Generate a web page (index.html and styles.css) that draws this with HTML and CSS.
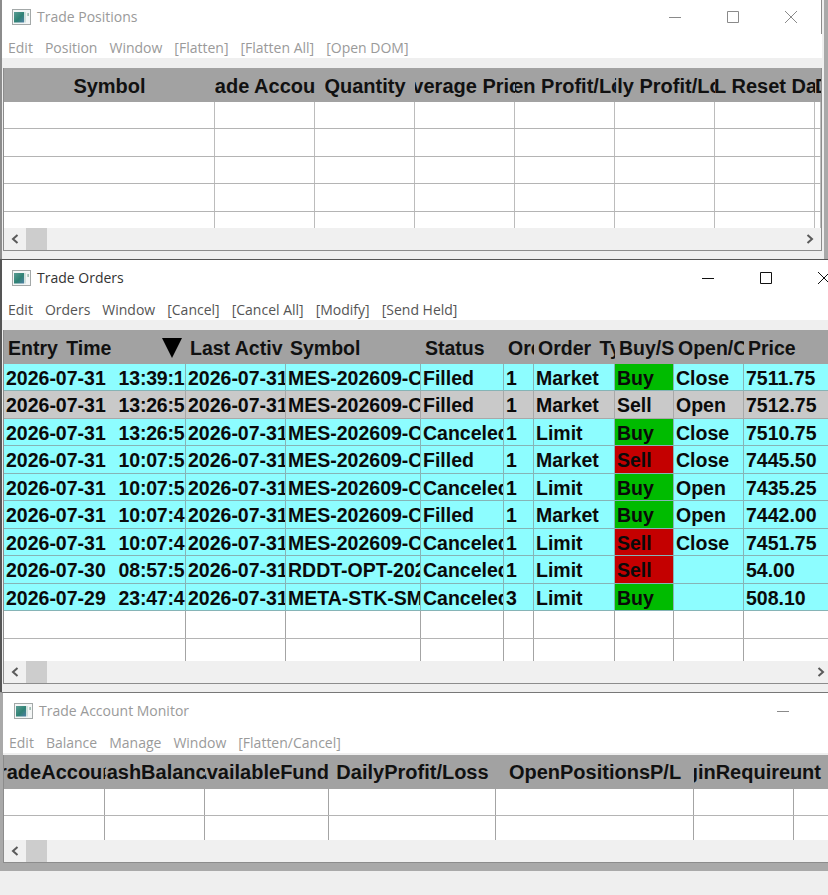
FILE: index.html
```html
<!DOCTYPE html>
<html lang="en">
<head>
<meta charset="utf-8">
<title>Trade Windows</title>
<link rel="stylesheet" href="styles.css">
</head>
<body>
<svg class="defs" aria-hidden="true">
  <defs>
    <linearGradient id="iconFill" x1="0" y1="0" x2="1" y2="1">
      <stop offset="0" stop-color="#5a9c94"/>
      <stop offset="0.55" stop-color="#2f8274"/>
      <stop offset="1" stop-color="#4f7fa6"/>
    </linearGradient>
    <symbol id="appIcon" viewBox="0 0 19 16">
      <rect x="0.5" y="0.5" width="18" height="15" fill="#f4f6f6" stroke="#a3a8a8"/>
      <rect x="2" y="3" width="10" height="10.5" fill="url(#iconFill)"/>
      <rect x="12" y="3" width="2" height="10.5" fill="#cfe0dc"/>
      <rect x="15.5" y="4" width="1.2" height="3" fill="#7fa89a"/>
    </symbol>
  </defs>
</svg>
<main class="desktop">

  <section class="win win--positions">
    <header class="titlebar titlebar--edge">
      <svg class="app-icon"><use href="#appIcon"/></svg>
      <span class="title">Trade Positions</span>
      <div class="controls">
        <span class="ctl"><svg class="ctl-icon" viewBox="0 0 12 12"><path d="M0 6.5H12"/></svg></span>
        <span class="ctl"><svg class="ctl-icon" viewBox="0 0 12 12"><path d="M.5.5H11.5V11.5H.5Z"/></svg></span>
        <span class="ctl"><svg class="ctl-icon" viewBox="0 0 12 12"><path d="M0 0L12 12M12 0L0 12"/></svg></span>
      </div>
    </header>
    <nav class="menu">
      <span>Edit</span><span>Position</span><span>Window</span><span>[Flatten]</span><span>[Flatten All]</span><span>[Open DOM]</span>
    </nav>
    <div class="band"></div>
    <div class="frame">
      <div class="row row--head row--wide cols-pos">
        <div class="cell hc">Symbol</div><div class="cell hc">Trade Account</div><div class="cell hc">Quantity</div><div class="cell hc">Average Price</div><div class="cell hc">Open Profit/Loss</div><div class="cell hc">Daily Profit/Loss</div><div class="cell hc">P/L Reset Date</div><div class="cell hs">Date</div>
      </div>
      <div class="grid grid--pos">
        <div class="row cols-pos"><i></i><i></i><i></i><i></i><i></i><i></i><i></i><i></i></div>
        <div class="row cols-pos"><i></i><i></i><i></i><i></i><i></i><i></i><i></i><i></i></div>
        <div class="row cols-pos"><i></i><i></i><i></i><i></i><i></i><i></i><i></i><i></i></div>
        <div class="row cols-pos"><i></i><i></i><i></i><i></i><i></i><i></i><i></i><i></i></div>
        <div class="row cols-pos"><i></i><i></i><i></i><i></i><i></i><i></i><i></i><i></i></div>
      </div>
      <div class="scroll">
        <span class="arrow"><svg viewBox="0 0 8 10"><path d="M6.5 1L2 5l4.5 4"/></svg></span>
        <span class="thumb"></span>
        <span class="arrow arrow--end"><svg viewBox="0 0 8 10"><path d="M1.5 1L6 5 1.5 9"/></svg></span>
      </div>
    </div>
  </section>

  <section class="win win--orders">
    <header class="titlebar titlebar--tall">
      <svg class="app-icon"><use href="#appIcon"/></svg>
      <span class="title title--active">Trade Orders</span>
      <div class="controls controls--active">
        <span class="ctl"><svg class="ctl-icon" viewBox="0 0 12 12"><path d="M0 6.5H12"/></svg></span>
        <span class="ctl"><svg class="ctl-icon" viewBox="0 0 12 12"><path d="M.5.5H11.5V11.5H.5Z"/></svg></span>
        <span class="ctl"><svg class="ctl-icon" viewBox="0 0 12 12"><path d="M0 0L12 12M12 0L0 12"/></svg></span>
      </div>
    </header>
    <nav class="menu menu--active">
      <span>Edit</span><span>Orders</span><span>Window</span><span>[Cancel]</span><span>[Cancel All]</span><span>[Modify]</span><span>[Send Held]</span>
    </nav>
    <div class="band"></div>
    <div class="frame">
      <div class="row row--head cols-ord">
        <div class="cell hl hl--sort hl--gap">Entry Time<span class="sort"></span></div><div class="cell hl">Last Activ</div><div class="cell hl">Symbol</div><div class="cell hl">Status</div><div class="cell hl">Order Qty</div><div class="cell hl hl--gap">Order Type</div><div class="cell hl">Buy/Sell</div><div class="cell hl">Open/Close</div><div class="cell hl">Price</div>
      </div>
      <div class="grid grid--ord">
        <div class="row data cols-ord"><div class="cell dt">2026-07-31  <span class="tm">13:39:15</span></div><div class="cell">2026-07-31 13:39</div><div class="cell">MES-202609-CME</div><div class="cell">Filled</div><div class="cell">1</div><div class="cell">Market</div><div class="cell buy">Buy</div><div class="cell">Close</div><div class="cell">7511.75</div></div>
        <div class="row data data--muted cols-ord"><div class="cell dt">2026-07-31  <span class="tm">13:26:55</span></div><div class="cell">2026-07-31 13:26</div><div class="cell">MES-202609-CME</div><div class="cell">Filled</div><div class="cell">1</div><div class="cell">Market</div><div class="cell">Sell</div><div class="cell">Open</div><div class="cell">7512.75</div></div>
        <div class="row data cols-ord"><div class="cell dt">2026-07-31  <span class="tm">13:26:55</span></div><div class="cell">2026-07-31 13:39</div><div class="cell">MES-202609-CME</div><div class="cell">Canceled</div><div class="cell">1</div><div class="cell">Limit</div><div class="cell buy">Buy</div><div class="cell">Close</div><div class="cell">7510.75</div></div>
        <div class="row data cols-ord"><div class="cell dt">2026-07-31  <span class="tm">10:07:55</span></div><div class="cell">2026-07-31 10:07</div><div class="cell">MES-202609-CME</div><div class="cell">Filled</div><div class="cell">1</div><div class="cell">Market</div><div class="cell sell">Sell</div><div class="cell">Close</div><div class="cell">7445.50</div></div>
        <div class="row data cols-ord"><div class="cell dt">2026-07-31  <span class="tm">10:07:55</span></div><div class="cell">2026-07-31 13:26</div><div class="cell">MES-202609-CME</div><div class="cell">Canceled</div><div class="cell">1</div><div class="cell">Limit</div><div class="cell buy">Buy</div><div class="cell">Open</div><div class="cell">7435.25</div></div>
        <div class="row data cols-ord"><div class="cell dt">2026-07-31  <span class="tm">10:07:41</span></div><div class="cell">2026-07-31 10:07</div><div class="cell">MES-202609-CME</div><div class="cell">Filled</div><div class="cell">1</div><div class="cell">Market</div><div class="cell buy">Buy</div><div class="cell">Open</div><div class="cell">7442.00</div></div>
        <div class="row data cols-ord"><div class="cell dt">2026-07-31  <span class="tm">10:07:41</span></div><div class="cell">2026-07-31 10:07</div><div class="cell">MES-202609-CME</div><div class="cell">Canceled</div><div class="cell">1</div><div class="cell">Limit</div><div class="cell sell">Sell</div><div class="cell">Close</div><div class="cell">7451.75</div></div>
        <div class="row data cols-ord"><div class="cell dt">2026-07-30  <span class="tm">08:57:51</span></div><div class="cell">2026-07-31 09:30</div><div class="cell">RDDT-OPT-20260821</div><div class="cell">Canceled</div><div class="cell">1</div><div class="cell">Limit</div><div class="cell sell">Sell</div><div class="cell"></div><div class="cell">54.00</div></div>
        <div class="row data cols-ord"><div class="cell dt">2026-07-29  <span class="tm">23:47:41</span></div><div class="cell">2026-07-31 09:30</div><div class="cell">META-STK-SMART</div><div class="cell">Canceled</div><div class="cell">3</div><div class="cell">Limit</div><div class="cell buy">Buy</div><div class="cell"></div><div class="cell">508.10</div></div>
        <div class="row cols-ord"><i></i><i></i><i></i><i></i><i></i><i></i><i></i><i></i><i></i></div>
        <div class="row cols-ord"><i></i><i></i><i></i><i></i><i></i><i></i><i></i><i></i><i></i></div>
      </div>
      <div class="scroll">
        <span class="arrow"><svg viewBox="0 0 8 10"><path d="M6.5 1L2 5l4.5 4"/></svg></span>
        <span class="thumb"></span>
        <span class="arrow arrow--end"><svg viewBox="0 0 8 10"><path d="M1.5 1L6 5 1.5 9"/></svg></span>
      </div>
    </div>
  </section>

  <section class="win win--monitor">
    <header class="titlebar titlebar--tall titlebar--inset">
      <svg class="app-icon"><use href="#appIcon"/></svg>
      <span class="title">Trade Account Monitor</span>
      <div class="controls">
        <span class="ctl"><svg class="ctl-icon" viewBox="0 0 12 12"><path d="M0 6.5H12"/></svg></span>
        <span class="ctl"><svg class="ctl-icon" viewBox="0 0 12 12"><path d="M.5.5H11.5V11.5H.5Z"/></svg></span>
        <span class="ctl"><svg class="ctl-icon" viewBox="0 0 12 12"><path d="M0 0L12 12M12 0L0 12"/></svg></span>
      </div>
    </header>
    <nav class="menu">
      <span>Edit</span><span>Balance</span><span>Manage</span><span>Window</span><span>[Flatten/Cancel]</span>
    </nav>
    <div class="band band--thin"></div>
    <div class="frame">
      <div class="row row--head row--wide row--high cols-mon">
        <div class="cell hc">TradeAccount</div><div class="cell hc">CashBalance</div><div class="cell hr hr--tight">AvailableFund</div><div class="cell hc">DailyProfit/Loss</div><div class="cell hc">OpenPositionsP/L</div><div class="cell hc">MarginRequirement</div><div class="cell hr">Account</div>
      </div>
      <div class="grid grid--mon">
        <div class="row cols-mon"><i></i><i></i><i></i><i></i><i></i><i></i><i></i></div>
        <div class="row cols-mon"><i></i><i></i><i></i><i></i><i></i><i></i><i></i></div>
      </div>
      <div class="scroll">
        <span class="arrow"><svg viewBox="0 0 8 10"><path d="M6.5 1L2 5l4.5 4"/></svg></span>
        <span class="thumb"></span>
      </div>
    </div>
  </section>

</main>
</body>
</html>
```

FILE: styles.css
```css
* { box-sizing: border-box; }

html, body {
  margin: 0;
  height: 100%;
  background: #efefef;
}

.defs { position: absolute; width: 0; height: 0; }

.desktop {
  position: relative;
  width: 828px;
  height: 895px;
  overflow: hidden;
  font-family: "Open Sans", "Noto Sans", sans-serif;
}

/* Windows sit on a free canvas, overlapping the viewport edge */
.win {
  position: absolute;
  left: 0;
  display: flex;
  flex-direction: column;
  background: #efefef;
}

.win--positions {
  top: 0;
  width: 828px;
  height: 259px;
  padding-right: 2px;
  border-left: 2px solid #8c8c8c;
  border-right: 4px solid #a9a9a9;
}

.win--orders {
  top: 259px;
  width: 853px;
  height: 433px;
  border-top: 1px solid #555;
  border-left: 2px solid #555;
}

.win--monitor {
  top: 692px;
  width: 928px;
  border-top: 1px solid #777;
  border-left: 3px solid #a9a9a9;
  border-bottom: 8px solid #a9a9a9;
}

/* Title bar */
.titlebar {
  flex: none;
  height: 34px;
  display: flex;
  align-items: center;
  gap: 6px;
  padding-left: 10px;
  background: #fff;
}
.titlebar--edge { border-right: 1px solid #8c8c8c; padding-right: 1px; }
.titlebar--tall { height: 36px; }
.titlebar--inset { padding-left: 11px; }

.app-icon { flex: none; width: 19px; height: 16px; }

.title {
  font-size: 14px;
  line-height: 20px;
  color: #9a9a9a;
  white-space: nowrap;
}
.title--active { color: #333; }

.controls { display: flex; margin-left: auto; }

.ctl {
  width: 58px;
  height: 20px;
  display: flex;
  align-items: center;
  justify-content: center;
}

.ctl-icon {
  width: 12px;
  height: 12px;
  fill: none;
  stroke: #8a8a8a;
  stroke-width: 1;
}
.controls--active .ctl-icon { stroke: #111; }

/* Menu */
.menu {
  flex: none;
  display: flex;
  gap: 12px;
  padding: 4px 0 0 6px;
  font-size: 14px;
  line-height: 20px;
  color: #9a9a9a;
  background: #fff;
  white-space: nowrap;
}
.menu--active { color: #555; }

.band { flex: none; height: 10px; background: #efefef; }
.band--thin { height: 2px; }

/* Table frame */
.frame {
  flex: none;
  margin-left: 1px;
  border-left: 1px solid #8c8c8c;
  border-right: 1px solid #8c8c8c;
  border-bottom: 1px solid #8c8c8c;
  background: #fff;
  overflow: hidden;
}
.win--monitor .frame { margin-left: 0; }

.row {
  display: grid;
  height: 28px;
  border-bottom: 1px solid #b4b4b4;
  font-family: "Liberation Sans", Arial, sans-serif;
  font-size: 19.5px;
  font-weight: 700;
  line-height: 28px;
  color: #0a0a0a;
}
.grid .row:nth-child(odd) { height: 27px; }
.row > i { border-right: 1px solid #bcbcbc; }

.row--head {
  height: 34px;
  line-height: 33px;
  background: #a2a2a2;
  border-bottom: 0;
  color: #111;
}
.row--head .cell { padding-top: 2px; }
.row--wide { font-size: 20px; }
.row--high .cell { padding-top: 1px; }

.cols-pos { grid-template-columns: 211px repeat(5, 100px) 100px 6px; }
.cols-ord { grid-template-columns: 182px 100px 135px 83px 30px 81px 59px 70px 1fr; }
.cols-mon { grid-template-columns: 101px 100px 124px 167px 198px 100px 35px; }

.grid { overflow: hidden; }
.grid--pos { height: 126px; }
.grid--ord { height: 297px; }
.grid--mon { height: 51px; }

.cols-ord > i, .cols-mon > i { border-right-color: #a4a4a4; }

.cell {
  min-width: 0;
  overflow: hidden;
  white-space: nowrap;
  padding-left: 2px;
}

.hc {
  display: flex;
  justify-content: center;
  padding-left: 0;
}
.hs { padding-left: 0; }
.hr {
  display: flex;
  justify-content: flex-end;
  padding-right: 8px;
}
.hr--tight { padding-right: 0; }
.hl { padding-left: 4px; }
.hl--gap { word-spacing: 3px; }
.hl--sort { position: relative; }

.sort {
  position: absolute;
  left: 158px;
  top: 8px;
  border-left: 10px solid transparent;
  border-right: 10px solid transparent;
  border-top: 20px solid #000;
}

.data {
  background: #8dfdff;
  border-bottom-color: #86b4b6;
}
.data .cell { border-right: 1px solid #86b4b6; }
.data--muted { background: #c9c9c9; border-bottom-color: #a8a8a8; }
.data--muted .cell { border-right-color: #a8a8a8; }

.dt { white-space: pre; word-spacing: 1px; }
.tm { letter-spacing: -0.2px; }

.data .buy { background: #00bb00; }
.data .sell { background: #c40000; }

/* Horizontal scrollbar */
.scroll {
  display: flex;
  align-items: stretch;
  height: 22px;
  background: #f0f0f0;
}

.arrow {
  flex: none;
  width: 22px;
  display: flex;
  align-items: center;
  justify-content: center;
}
.arrow svg {
  width: 8px;
  height: 10px;
  fill: none;
  stroke: #5a5a5a;
  stroke-width: 2;
}
.arrow--end { margin-left: auto; }
.win--orders .arrow--end { margin-right: 20px; }

.thumb {
  flex: none;
  width: 21px;
  background: #cdcdcd;
}
```
